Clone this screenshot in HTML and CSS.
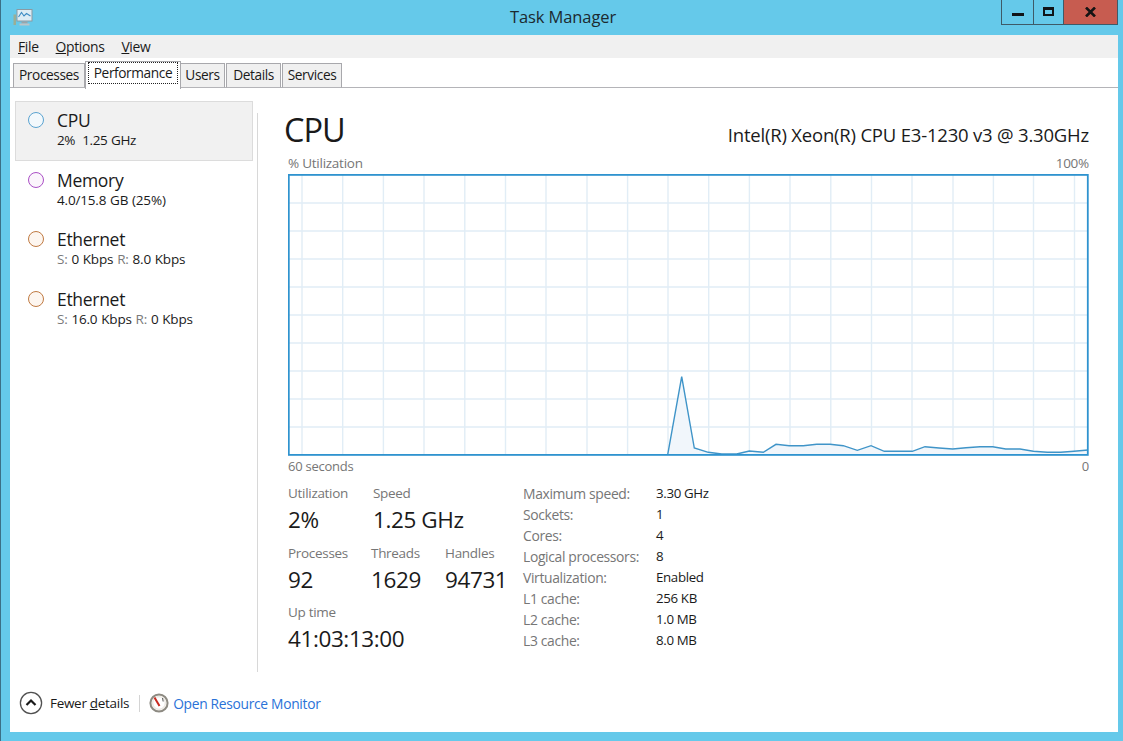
FILE: index.html
```html
<!DOCTYPE html>
<html lang="en">
<head>
<meta charset="utf-8">
<title>Task Manager</title>
<link rel="stylesheet" href="styles.css">
</head>
<body>
<div class="window">
  <header class="titlebar">
    <svg class="app-icon" width="20" height="18" viewBox="0 0 20 18">
      <rect x="0.5" y="5.5" width="2.5" height="10.5" fill="#9aae96"/>
      <rect x="4" y="0.5" width="15" height="11.5" fill="#dcecf5" stroke="#8b9aa2"/>
      <path d="M5.5 8 L8.5 3.5 L11 7 L13.5 4.5 L17.5 7" fill="none" stroke="#3d8cc4" stroke-width="1.1"/>
      <rect x="8.5" y="12.5" width="6" height="2" fill="#9aa4aa"/>
      <rect x="6.5" y="14.5" width="10" height="2" fill="#bcc4c8"/>
    </svg>
    <div class="title">Task Manager</div>
    <div class="winbtns">
      <div class="winbtn minbtn"><span class="min-glyph"></span></div>
      <div class="winbtn maxbtn"><span class="max-glyph"></span></div>
      <div class="winbtn closebtn">
        <svg width="11" height="10" viewBox="0 0 11 10"><path d="M1 0.5 L10 9.5 M10 0.5 L1 9.5" stroke="#141414" stroke-width="2.6" fill="none"/></svg>
      </div>
    </div>
  </header>
  <div class="client">
    <nav class="menubar">
      <span class="menuitem"><u>F</u>ile</span>
      <span class="menuitem"><u>O</u>ptions</span>
      <span class="menuitem"><u>V</u>iew</span>
    </nav>
    <div class="tabs">
      <div class="tab tab-processes">Processes</div>
      <div class="tab tab-active"><span class="focus">Performance</span></div>
      <div class="tab tab-users">Users</div>
      <div class="tab tab-details">Details</div>
      <div class="tab tab-services">Services</div>
    </div>
    <main class="main">
      <aside class="sidebar">
        <div class="nav">
          <div class="navitem selected">
            <span class="dot dot-cpu"></span>
            <div class="navtext"><div class="navname">CPU</div><div class="navsub navsub-cpu">2%&nbsp; 1.25 GHz</div></div>
          </div>
          <div class="navitem">
            <span class="dot dot-mem"></span>
            <div class="navtext"><div class="navname">Memory</div><div class="navsub">4.0/15.8 GB (25%)</div></div>
          </div>
          <div class="navitem">
            <span class="dot dot-eth"></span>
            <div class="navtext"><div class="navname">Ethernet</div><div class="navsub"><span class="dim">S:</span> 0 Kbps <span class="dim">R:</span> 8.0 Kbps</div></div>
          </div>
          <div class="navitem">
            <span class="dot dot-eth"></span>
            <div class="navtext"><div class="navname">Ethernet</div><div class="navsub"><span class="dim">S:</span> 16.0 Kbps <span class="dim">R:</span> 0 Kbps</div></div>
          </div>
        </div>
        <div class="divider"></div>
      </aside>
      <section class="panel">
        <div class="headrow">
          <h1 class="heading">CPU</h1>
          <div class="model">Intel(R) Xeon(R) CPU E3-1230 v3 @ 3.30GHz</div>
        </div>
        <div class="axis axis-top"><span>% Utilization</span><span>100%</span></div>
        <svg class="chart" width="801" height="282" viewBox="288 174 801 282">
          <g stroke="#e1edf6" stroke-width="1.4">
            <path d="M302 174V455M342.7 174V455M383.4 174V455M424 174V455M464.8 174V455M505.5 174V455M546 174V455M587 174V455M627.6 174V455M668 174V455M708.7 174V455M749.4 174V455M790 174V455M830.8 174V455M871.5 174V455M912 174V455M953 174V455M993.4 174V455M1033.5 174V455M1074.5 174V455"/>
            <path d="M288 203H1088M288 231H1088M288 259H1088M288 287H1088M288 315H1088M288 343H1088M288 371H1088M288 399H1088M288 427H1088"/>
          </g>
          <path d="M667.7 454.7L681.7 376.7L694.3 448L708.3 452.3L721.7 454L736.7 454L749.3 451L763.3 452.3L776 444.3L789.3 445.7L803.3 445.7L816.7 444.3L830 444.3L843.3 445.7L857.3 450.3L871 445.7L884.3 451.3L898.3 451.3L912.3 451.3L925 446.7L939 448L952.7 449L966 447.7L980 446.7L992.7 446.7L1005.7 449L1020 449L1033.3 451.3L1047.3 452.3L1060.7 452.3L1074 451.3L1088 450V455H667.7Z" fill="#f1f6fb" stroke="none"/>
          <path d="M667.7 454.7L681.7 376.7L694.3 448L708.3 452.3L721.7 454L736.7 454L749.3 451L763.3 452.3L776 444.3L789.3 445.7L803.3 445.7L816.7 444.3L830 444.3L843.3 445.7L857.3 450.3L871 445.7L884.3 451.3L898.3 451.3L912.3 451.3L925 446.7L939 448L952.7 449L966 447.7L980 446.7L992.7 446.7L1005.7 449L1020 449L1033.3 451.3L1047.3 452.3L1060.7 452.3L1074 451.3L1088 450" fill="none" stroke="#3f94c8" stroke-width="1.4"/>
          <rect x="288.8" y="174.9" width="799" height="280" fill="none" stroke="#2f93cf" stroke-width="1.8"/>
        </svg>
        <div class="axis axis-bottom"><span>60 seconds</span><span>0</span></div>
        <div class="details">
          <div class="stats">
            <div class="statrow">
              <div class="stat col-util"><div class="statlabel">Utilization</div><div class="statvalue">2%</div></div>
              <div class="stat"><div class="statlabel">Speed</div><div class="statvalue">1.25 GHz</div></div>
            </div>
            <div class="statrow">
              <div class="stat col-proc"><div class="statlabel">Processes</div><div class="statvalue">92</div></div>
              <div class="stat col-thr"><div class="statlabel">Threads</div><div class="statvalue">1629</div></div>
              <div class="stat"><div class="statlabel">Handles</div><div class="statvalue">94731</div></div>
            </div>
            <div class="statrow">
              <div class="stat"><div class="statlabel">Up time</div><div class="statvalue">41:03:13:00</div></div>
            </div>
          </div>
          <dl class="specs">
            <dt>Maximum speed:</dt><dd>3.30 GHz</dd>
            <dt>Sockets:</dt><dd>1</dd>
            <dt>Cores:</dt><dd>4</dd>
            <dt>Logical processors:</dt><dd>8</dd>
            <dt>Virtualization:</dt><dd>Enabled</dd>
            <dt>L1 cache:</dt><dd>256 KB</dd>
            <dt>L2 cache:</dt><dd>1.0 MB</dd>
            <dt>L3 cache:</dt><dd>8.0 MB</dd>
          </dl>
        </div>
      </section>
    </main>
    <footer class="footer">
      <svg class="fewer-icon" width="24" height="24" viewBox="0 0 24 24">
        <circle cx="12" cy="12" r="10.6" fill="#fff" stroke="#505050" stroke-width="1.3"/>
        <path d="M7.5 14 L12 9.5 L16.5 14" fill="none" stroke="#1a1a1a" stroke-width="2.2"/>
      </svg>
      <span class="fewer">Fewer <u>d</u>etails</span>
      <span class="footsep"></span>
      <svg class="gauge" width="20" height="20" viewBox="0 0 20 20">
        <circle cx="10" cy="10" r="8.6" fill="#f6f3ee" stroke="#8d8a82" stroke-width="2"/>
        <circle cx="10" cy="10" r="6.2" fill="#fff" stroke="#d8d4cc" stroke-width="0.6"/>
        <path d="M5.5 4.5 L10.5 13" stroke="#c8281e" stroke-width="2"/>
        <path d="M13.5 5 L14.2 8.5" stroke="#5a5a5a" stroke-width="1.1"/>
      </svg>
      <span class="link">Open Resource Monitor</span>
    </footer>
  </div>
</div>
</body>
</html>
```
FILE: styles.css
```css
* { box-sizing: border-box; }
html, body { margin: 0; padding: 0; }
body { font-family: "Open Sans", "Noto Sans", sans-serif; color: #1a1a1a; }
.window {
  width: 1123px; height: 741px; background: #65c9ea;
  border-left: 1px solid #3b6f86;
  display: flex; flex-direction: column; overflow: hidden;
}
.titlebar { height: 35px; flex: none; display: flex; align-items: flex-start; padding-left: 12px; }
.app-icon { margin-top: 9px; flex: none; }
.title { flex: 1; text-align: center; font-size: 16.5px; line-height: 34px; padding-left: 92px; color: #1c2a30; letter-spacing: -0.1px; }
.winbtns { display: flex; height: 25px; flex: none; margin-right: 5px; border: 1px solid #3e5a68; border-top: 0; }
.winbtn { display: flex; align-items: center; justify-content: center; height: 24px; }
.minbtn { width: 32px; border-right: 1px solid #3e5a68; padding-top: 4px; }
.maxbtn { width: 30px; padding-bottom: 1px; border-right: 1px solid #3e5a68; }
.closebtn { width: 53px; background: #c75c50; }
.min-glyph { width: 12px; height: 3px; background: #101418; display: block; }
.max-glyph { width: 11px; height: 9px; border: 2px solid #101418; border-top-width: 3px; display: block; }
.client { flex: 1; margin: 0 5px 9px 9px; background: #fff; display: flex; flex-direction: column; }
.menubar { height: 23px; flex: none; background: #f0f0f0; display: flex; align-items: center; padding: 0 0 1px 8px; gap: 17px; font-size: 13.9px; }
.menuitem { letter-spacing: -0.35px; }
.tabs { height: 30px; flex: none; display: flex; align-items: flex-end; padding-left: 3px; border-bottom: 1px solid #b4b4b8; font-size: 13.7px; letter-spacing: -0.4px; }
.tab { height: 25px; padding-bottom: 2px; margin-bottom: -1px; background: #f0f0f0; border: 1px solid #a8a8ac; border-bottom-color: #b4b4b8; display: flex; align-items: center; justify-content: center; margin-right: 1px; }
.tab-processes { width: 72px; }
.tab-users { width: 45px; margin-left: -1px; }
.tab-details { width: 55px; }
.tab-services { width: 60px; }
.tab-active { width: 96px; height: 28px; background: #fff; border-bottom: 0; margin-bottom: -2px; position: relative; z-index: 1; align-items: flex-start; padding: 1px 0 0; margin-left: -1px; margin-right: 0; }
.focus { outline: 1px dotted #222; outline-offset: 0; padding: 0 5px; line-height: 20px; }
.main { flex: 1; display: flex; min-height: 0; }
.sidebar { width: 248px; flex: none; display: flex; }
.nav { width: 243px; padding: 13px 0 0 5px; flex: none; }
.divider { width: 1px; height: 559px; margin-top: 25px; margin-left: 4px; background: #d8d8d8; }
.navitem { height: 59.6px; display: flex; padding: 8px 0 0 12px; border: 1px solid transparent; }
.navitem.selected { background: #f1f1f1; border-color: #dcdcdc; }
.dot { width: 16px; height: 16px; border-radius: 50%; border: 1.7px solid; flex: none; margin-top: 2px; margin-right: 13px; }
.dot-cpu { border-color: #5aa3d0; background: #f2f8fc; }
.dot-mem { border-color: #ab4fc6; background: #fbf5fc; }
.dot-eth { border-color: #c07a42; background: #fdf6f0; }
.navname { font-size: 17.5px; line-height: 20px; letter-spacing: -0.3px; }
.navsub { font-size: 13.5px; line-height: 18px; letter-spacing: -0.18px; word-spacing: 0.5px; margin-top: 1px; }
.navsub-cpu { letter-spacing: -0.4px; }
.dim { color: #7a7a7a; }
.panel { flex: 1; padding-left: 30px; width: 800px; }
.headrow { display: flex; justify-content: space-between; align-items: flex-end; height: 58px; width: 804px; }
.heading { font-size: 32.5px; font-weight: 400; margin: 0 0 -4px -4px; line-height: 40px; letter-spacing: -1px; }
.model { font-size: 18.5px; line-height: 22px; letter-spacing: -0.2px; padding-right: 3px; }
.axis { display: flex; justify-content: space-between; width: 801px; color: #767676; letter-spacing: -0.25px; }
.axis-top { height: 28px; padding-top: 9px; line-height: 17px; font-size: 13.5px; }
.axis-bottom { height: 22px; padding-top: 1px; line-height: 18px; font-size: 13px; }
.chart { display: block; }
.details { display: flex; padding-top: 6px; }
.stats { width: 235px; flex: none; }
.statrow { display: flex; height: 59.6px; }
.col-util { width: 85px; }
.col-proc { width: 83px; }
.col-thr { width: 74px; }
.statlabel { font-size: 13.5px; line-height: 18px; color: #767676; letter-spacing: -0.3px; }
.statvalue { font-size: 22.5px; line-height: 30px; margin-top: 3px; letter-spacing: -0.4px; white-space: nowrap; }
.specs { margin: -1px 0 0; display: grid; grid-template-columns: 133px auto; grid-auto-rows: 21px; line-height: 21px; letter-spacing: -0.35px; }
.specs dt { color: #767676; font-size: 13.9px; }
.specs dd { margin: 0; font-size: 13.3px; }
.footer { height: 60px; flex: none; display: flex; align-items: center; padding: 2px 0 0 9px; font-size: 13.5px; letter-spacing: -0.3px; }
.fewer-icon { flex: none; }
.fewer { margin-left: 7px; }
.footsep { width: 1px; height: 17px; background: #d4d4d4; margin: 0 9px 0 10px; }
.gauge { flex: none; }
.link { color: #2a72d8; margin-left: 4px; font-size: 13.8px; letter-spacing: -0.3px; }
```
